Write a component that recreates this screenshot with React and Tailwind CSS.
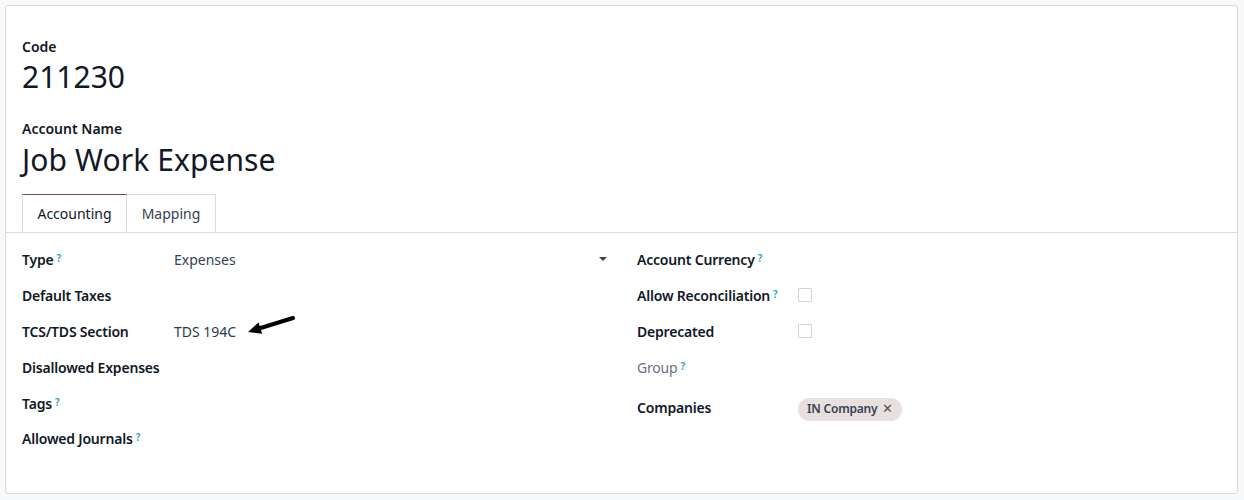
import React from "react";

const Help = () => (
  <sup className="ml-[3px] text-[10px] font-semibold text-[#1f9bc7] relative -top-[3px]">?</sup>
);

const Row = ({ label, help, labelClass = "", rowClass = "", labelWidth, children }) => (
  <div className={`flex items-center h-[36px] ${rowClass}`}>
    <div className={`shrink-0 text-[14px] font-semibold tracking-[-0.2px] text-[#111827] ${labelClass}`} style={{ width: labelWidth }}>
      {label}
      {help && <Help />}
    </div>
    <div className="flex-1 flex items-center text-[14px] text-[#374151]">{children}</div>
  </div>
);

const Checkbox = () => <span className="w-[14px] h-[14px] border border-[#d1d5db] bg-white rounded-[1px]" />;

const Arrow = () => (
  <svg width="48" height="22" viewBox="0 0 48 22" className="ml-[11px] -mt-[11px]">
    <line x1="12" y1="13.5" x2="46" y2="3" stroke="#000" strokeWidth="4" strokeLinecap="round" />
    <polygon points="1,17 11.6,7.4 15.2,18.8" fill="#000" />
  </svg>
);

const App = () => {
  return (
    <div className="min-h-[500px] bg-[#f8f9fa] pt-[5px] pl-[5px]" style={{ fontFamily: '"Noto Sans", "Open Sans", sans-serif' }}>
      <div className="w-[1233px] h-[489px] bg-white border border-[#d8dadd] rounded-[3px] px-4 pt-[30px]">
        {/* Header */}
        <div className="text-[14px] font-semibold leading-[21px] text-[#111827]">Code</div>
        <div className="text-[30px] leading-[40px] text-[#111827]">211230</div>

        <div className="mt-[21px] text-[14px] font-semibold leading-[21px] text-[#111827]">Account Name</div>
        <div className="mt-[1px] text-[30px] leading-[40px] text-[#111827] tracking-[0.1px]">Job Work Expense</div>

        {/* Tabs */}
        <div className="-mx-4 px-4 mt-[14px] flex border-b border-[#d8dadd]">
          <div className="w-[105px] h-[38px] flex items-center justify-center text-[14px] text-[#111827] bg-white border border-[#d8dadd] border-t-[#714b67] border-b-white -mb-px">
            Accounting
          </div>
          <div className="w-[89px] h-[38px] flex items-center justify-center text-[14px] text-[#374151] border border-l-0 border-b-0 border-[#d8dadd]">
            Mapping
          </div>
        </div>

        {/* Form */}
        <div className="grid grid-cols-[599px_1fr] pt-[8px]">
          <div className="pr-[14px]">
            <Row label="Type" help labelWidth={152}>
              <span className="flex-1">Expenses</span>
              <span className="w-0 h-0 border-l-[4px] border-r-[4px] border-t-[4px] border-l-transparent border-r-transparent border-t-[#374151]" />
            </Row>
            <Row label="Default Taxes" labelWidth={152} />
            <Row label="TCS/TDS Section" labelWidth={152}>
              <span className="text-[#2b3a4f]">TDS 194C</span>
              <Arrow />
            </Row>
            <Row label="Disallowed Expenses" labelWidth={152} />
            <Row label="Tags" help labelWidth={152} />
            <Row label="Allowed Journals" help labelWidth={152} rowClass="-mt-[1px]" />
          </div>

          <div className="pl-[16px]">
            <Row label="Account Currency" help labelWidth={161} />
            <Row label="Allow Reconciliation" help labelWidth={161}>
              <Checkbox />
            </Row>
            <Row label="Deprecated" labelWidth={161}>
              <Checkbox />
            </Row>
            <Row label="Group" help labelWidth={161} labelClass="!font-normal !text-[#6b7280]" />
            <Row label="Companies" labelWidth={161} rowClass="mt-[4px]">
              <span className="inline-flex items-center h-[23px] px-[9px] rounded-full bg-[#e7e0de] text-[12px] font-semibold tracking-[-0.2px] text-[#374151] mt-[4px]">
                IN Company
                <span className="ml-[5px] text-[13px] font-normal text-[#4b5563]">✕</span>
              </span>
            </Row>
          </div>
        </div>
      </div>
    </div>
  );
};

export default App;
